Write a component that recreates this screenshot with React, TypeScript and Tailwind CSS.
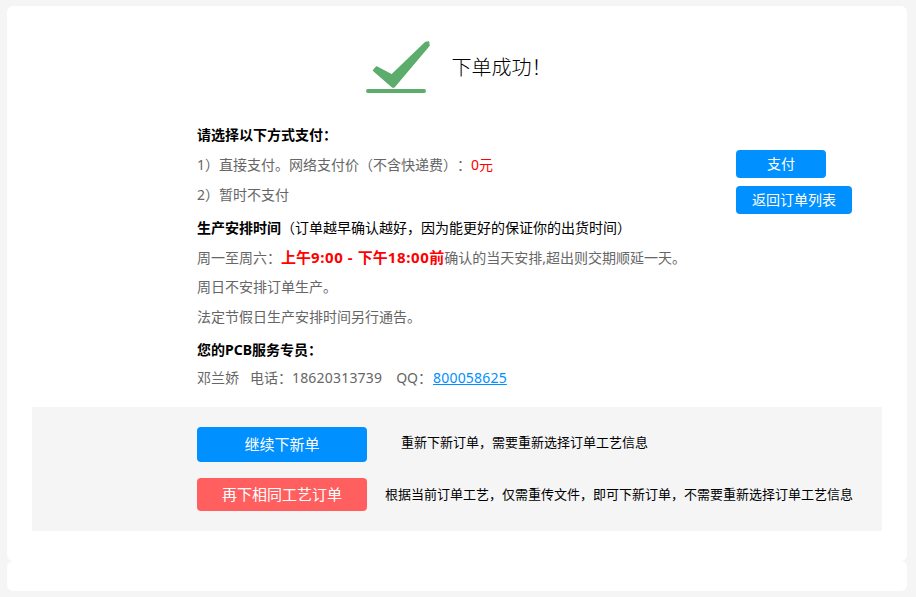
const cjk = "font-['Noto_Sans','Noto_Sans_CJK_SC',sans-serif] [text-spacing-trim:space-all]";

function CheckMark() {
  return (
    <svg width="68" height="54" viewBox="0 0 68 54" className="shrink-0">
      <path
        d="M10.5 31.5 L13.5 28 L28.7 36 L62.5 3.5 L65.5 3 L66 6.5 L31 48 L29.5 48 Z"
        fill="#5cad6c"
        stroke="#5cad6c"
        strokeWidth="1.5"
        strokeLinejoin="round"
      />
      <rect x="3" y="50" width="60" height="4" rx="2" fill="#5cad6c" />
    </svg>
  );
}

function Row({ children, className = "" }: { children: React.ReactNode; className?: string }) {
  return <p className={`whitespace-nowrap ${className}`}>{children}</p>;
}

export default function App() {
  return (
    <div className={`h-[597px] overflow-hidden bg-[#f5f5f5] pl-[7px] pr-[9px] pt-[6px] text-[14px] text-[#666] ${cjk}`}>
      <main className="h-[555px] rounded-[6px] bg-white px-[25px]">
        <div className="flex h-[114px] items-center justify-center pt-[6px]">
          <CheckMark />
          <h1 className="ml-[21px] pt-[4px] text-[20px] font-light text-black">下单成功！</h1>
        </div>

        <section className="flex pl-[165px]">
          <div className="w-[539px]">
            <Row className="h-[30px] font-bold leading-[30px] text-black">请选择以下方式支付：</Row>
            <Row className="h-[30px] leading-[30px]">
              1）直接支付。网络支付价（不含快递费）：<span className="text-[#f00]">0元</span>
            </Row>
            <Row className="h-[30px] leading-[30px]">2）暂时不支付</Row>
            <Row className="mt-[3px] h-[29px] leading-[30px] text-black">
              <b>生产安排时间</b>（订单越早确认越好，因为能更好的保证你的出货时间）
            </Row>
            <Row className="h-[30px] leading-[30px]">
              周一至周六：
              <b className="text-[15px] text-[#f00]">
                上午<span className="tracking-[0.6px]">9:00 - </span>下午<span className="tracking-[0.6px]">18:00</span>前
              </b>
              确认的当天安排,超出则交期顺延一天。
            </Row>
            <Row className="h-[30px] leading-[30px]">周日不安排订单生产。</Row>
            <Row className="h-[30px] leading-[30px]">法定节假日生产安排时间另行通告。</Row>
            <Row className="mt-[3px] h-[28px] font-bold leading-[30px] text-black">您的PCB服务专员：</Row>
            <Row className="h-[30px] leading-[30px]">
              邓兰娇 &nbsp; 电话：<span className="mr-[3px] tracking-[0.2px]">18620313739</span> &nbsp; QQ：
              <a href="#" className="ml-[1px] tracking-[0.2px] text-[#0090ff] underline">800058625</a>
            </Row>
          </div>
          <div className="flex flex-col items-start gap-[8px] pt-[30px]">
            <button className="h-[28px] w-[90px] rounded-[4px] bg-[#0090ff] pb-[2px] text-white">支付</button>
            <button className="h-[28px] w-[116px] rounded-[4px] bg-[#0090ff] pb-[2px] text-white">返回订单列表</button>
          </div>
        </section>

        <section className="mt-[14px] flex h-[124px] flex-col gap-[16px] bg-[#f5f5f5] pl-[165px] pt-[20px] text-[13px] text-black">
          <div className="flex items-center">
            <button className="h-[35px] w-[170px] rounded-[4px] bg-[#0090ff] text-[15px] text-white">继续下新单</button>
            <span className="ml-[34px] whitespace-nowrap pb-[3px]">重新下新订单，需要重新选择订单工艺信息</span>
          </div>
          <div className="flex items-center">
            <button className="h-[33px] w-[170px] rounded-[4px] bg-[#ff5f5f] text-[15px] text-white">再下相同工艺订单</button>
            <span className="ml-[18px] whitespace-nowrap">根据当前订单工艺，仅需重传文件，即可下新订单，不需要重新选择订单工艺信息</span>
          </div>
        </section>
      </main>
      <div className="h-[30px] rounded-[6px] bg-white" />
    </div>
  );
}
